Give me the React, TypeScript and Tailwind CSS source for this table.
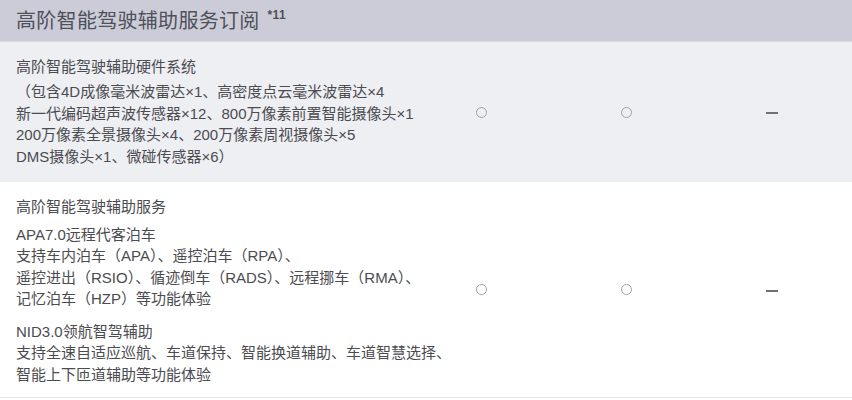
const font = {
  fontFamily: '"Liberation Sans", "Noto Sans CJK SC", sans-serif',
};

function Circle() {
  return <span className="block w-[11px] h-[11px] rounded-full border-[1.5px] border-[#a2a2a6]" />;
}

function Dash() {
  return <span className="block w-[12px] h-[2px] bg-[#707074] mt-[2px]" />;
}

function Marks() {
  return (
    <>
      <div className="flex items-center justify-center">
        <Circle />
      </div>
      <div className="flex items-center justify-center">
        <Circle />
      </div>
      <div className="flex items-center justify-center">
        <Dash />
      </div>
    </>
  );
}

export default function App() {
  return (
    <div className="w-[852px] h-[400px] bg-white overflow-hidden text-[#4b4b50]" style={font}>
      <header className="h-[42px] bg-[#cbccd8] flex items-center px-4 border-b border-[#d9dae2]">
        <h1 className="text-[20px] text-[#4f5058] tracking-[0.3px] flex items-start">
          高阶智能驾驶辅助服务订阅
          <span className="text-[12px] font-bold ml-[8px] mt-[3px] leading-none">*11</span>
        </h1>
      </header>

      <div className="grid grid-cols-[409px_145px_145px_145px] bg-[#eeeff3] h-[140px]">
        <div className="pl-4 pt-[14px] text-[15px] leading-[21.5px] whitespace-nowrap">
          <p className="mb-[3.5px]">高阶智能驾驶辅助硬件系统</p>
          <p>（包含4D成像毫米波雷达×1、高密度点云毫米波雷达×4</p>
          <p>新一代编码超声波传感器×12、800万像素前置智能摄像头×1</p>
          <p>200万像素全景摄像头×4、200万像素周视摄像头×5</p>
          <p>DMS摄像头×1、微碰传感器×6）</p>
        </div>
        <Marks />
      </div>

      <div className="grid grid-cols-[409px_145px_145px_145px] bg-white h-[216px] border-b border-[#e6e6ea]">
        <div className="pl-4 pt-[14px] text-[15px] leading-[21.5px] whitespace-nowrap">
          <p className="mb-[6px]">高阶智能驾驶辅助服务</p>
          <p>APA7.0远程代客泊车</p>
          <p>支持车内泊车（APA）、遥控泊车（RPA）、</p>
          <p>遥控进出（RSIO）、循迹倒车（RADS）、远程挪车（RMA）、</p>
          <p className="mb-[11px]">记忆泊车（HZP）等功能体验</p>
          <p>NID3.0领航智驾辅助</p>
          <p>支持全速自适应巡航、车道保持、智能换道辅助、车道智慧选择、</p>
          <p>智能上下匝道辅助等功能体验</p>
        </div>
        <Marks />
      </div>
    </div>
  );
}
